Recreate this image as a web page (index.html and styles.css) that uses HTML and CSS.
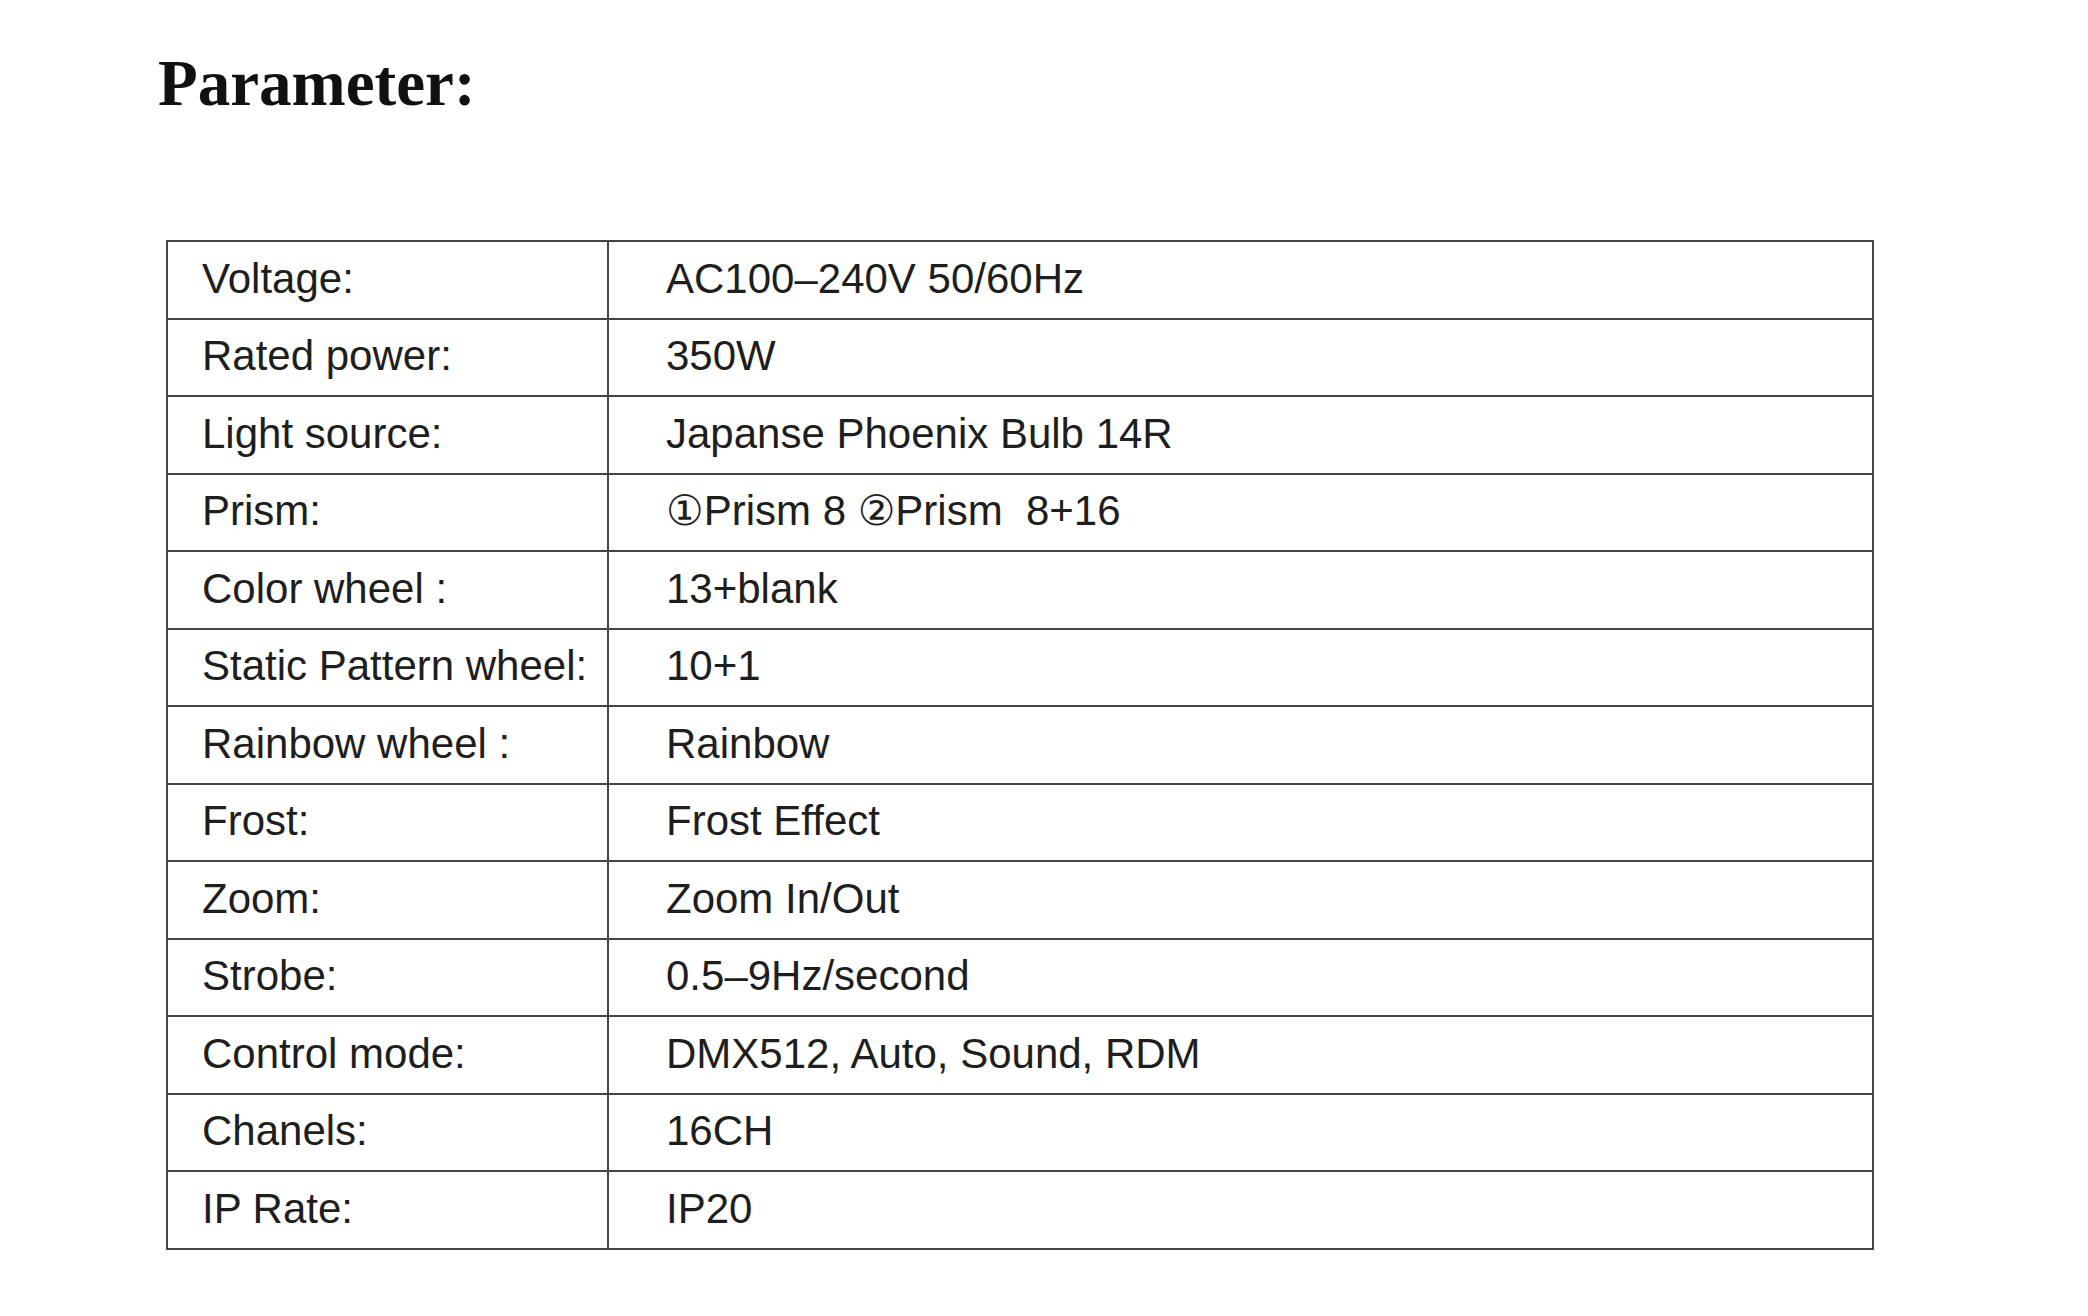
FILE: index.html
```html
<!DOCTYPE html>
<html lang="en">
<head>
<meta charset="utf-8">
<title>Parameter</title>
<link rel="stylesheet" href="styles.css">
</head>
<body>
<main class="page">
  <h1 class="title">Parameter:</h1>
  <div class="spec">
    <div class="cell label">Voltage:</div><div class="cell value">AC100–240V 50/60Hz</div>
    <div class="cell label">Rated power:</div><div class="cell value">350W</div>
    <div class="cell label">Light source:</div><div class="cell value">Japanse Phoenix Bulb 14R</div>
    <div class="cell label">Prism:</div><div class="cell value">①Prism 8 ②Prism &nbsp;8+16</div>
    <div class="cell label">Color wheel :</div><div class="cell value">13+blank</div>
    <div class="cell label">Static Pattern wheel:</div><div class="cell value">10+1</div>
    <div class="cell label">Rainbow wheel :</div><div class="cell value">Rainbow</div>
    <div class="cell label">Frost:</div><div class="cell value">Frost Effect</div>
    <div class="cell label">Zoom:</div><div class="cell value">Zoom In/Out</div>
    <div class="cell label">Strobe:</div><div class="cell value">0.5–9Hz/second</div>
    <div class="cell label">Control mode:</div><div class="cell value">DMX512, Auto, Sound, RDM</div>
    <div class="cell label">Chanels:</div><div class="cell value">16CH</div>
    <div class="cell label">IP Rate:</div><div class="cell value">IP20</div>
  </div>
</main>
</body>
</html>
```

FILE: styles.css
```css
html, body {
  margin: 0;
  padding: 0;
  background: #ffffff;
}

.page {
  padding: 51px 0 0 158px;
}

.title {
  margin: 0;
  font-family: "Liberation Serif", "Times New Roman", serif;
  font-weight: bold;
  font-size: 65px;
  line-height: 65px;
  color: #111111;
}

.spec {
  margin: 124px 0 0 8px;
  width: 1708px;
  box-sizing: border-box;
  display: grid;
  grid-template-columns: 439px 1fr;
  grid-auto-rows: 75.5px;
  gap: 2px;
  padding: 2px;
  background: #454545;
}

.cell {
  background: #ffffff;
  display: flex;
  align-items: center;
  padding-bottom: 2px;
  font-family: "Liberation Sans", "DejaVu Sans", Arial, sans-serif;
  font-size: 42px;
  line-height: 1;
  color: #1e1e1e;
  white-space: nowrap;
}

.label {
  padding-left: 34px;
}

.value {
  padding-left: 57px;
}
```
